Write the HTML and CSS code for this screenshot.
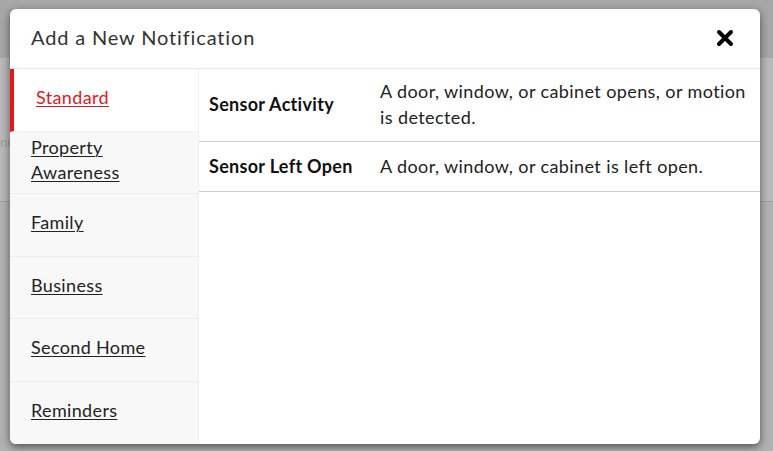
FILE: index.html
```html
<!DOCTYPE html>
<html>
<head>
<meta charset="utf-8">
<link rel="stylesheet" href="styles.css">
</head>
<body>
<div class="page">
  <div class="page-head"></div>
  <div class="page-band"><span class="ghost">nu</span></div>
  <div class="page-rest"></div>
</div>
<div class="overlay">
  <div class="modal">
    <div class="modal-head">
      <h1 class="title">Add a New Notification</h1>
      <button class="close" aria-label="Close">
        <svg width="18" height="18" viewBox="0 0 18 18"><path d="M3 3 L15 15 M15 3 L3 15" stroke="#000" stroke-width="4" stroke-linecap="round"/></svg>
      </button>
    </div>
    <div class="modal-body">
      <nav class="nav">
        <a class="nav-item active" href="#">Standard</a>
        <a class="nav-item" href="#">Property<br>Awareness</a>
        <a class="nav-item" href="#">Family</a>
        <a class="nav-item" href="#">Business</a>
        <a class="nav-item" href="#">Second Home</a>
        <a class="nav-item" href="#">Reminders</a>
      </nav>
      <div class="list">
        <div class="row tall">
          <div class="name">Sensor Activity</div>
          <div class="desc">A door, window, or cabinet opens, or motion is detected.</div>
        </div>
        <div class="row">
          <div class="name">Sensor Left Open</div>
          <div class="desc">A door, window, or cabinet is left open.</div>
        </div>
      </div>
    </div>
  </div>
</div>
</body>
</html>
```
FILE: styles.css
```css
* { box-sizing: border-box; }
html, body { margin: 0; padding: 0; }
body {
  width: 773px;
  height: 451px;
  overflow: hidden;
  font-family: "Lato", "Liberation Sans", sans-serif;
  position: relative;
  background: #b3b3b3;
}
.page { display: flex; flex-direction: column; height: 451px; }
.page-head { height: 58px; background: #a7a7a7; }
.page-band { height: 144px; background: #b9b9b9; border-bottom: 1px solid #9e9e9e; position: relative; }
.ghost { position: absolute; left: 0; top: 76px; color: #9c9c9c; font-size: 13px; }
.page-rest { flex: 1; background: #b2b2b2; }

.overlay { position: absolute; inset: 0; }
.modal {
  position: absolute;
  left: 10px;
  top: 9px;
  width: 750px;
  height: 435px;
  background: #fff;
  border-radius: 6px;
  box-shadow: 0 3px 8px rgba(0,0,0,0.55);
  display: flex;
  flex-direction: column;
  overflow: hidden;
}
.modal-head {
  height: 60px;
  flex: none;
  border-bottom: 1px solid #e8e8e8;
  display: flex;
  align-items: center;
  justify-content: space-between;
  padding: 0 26px 3px 21px;
}
.title {
  margin: 0;
  font-weight: 400;
  font-size: 20px;
  color: #333;
  letter-spacing: 0.85px;
}
.close {
  border: 0;
  background: none;
  padding: 0;
  width: 18px;
  height: 18px;
  display: flex;
  margin-top: 2px;
}
.modal-body { flex: 1; display: flex; }
.nav {
  width: 189px;
  flex: none;
  background: #f8f8f8;
  border-right: 1px solid #efefef;
  display: flex;
  flex-direction: column;
}
.nav-item {
  height: 62.5px;
  flex: none;
  display: flex;
  align-items: center;
  padding: 0 0 4px 21px;
  border-bottom: 1px solid #ededed;
  color: #222;
  font-size: 18px;
  letter-spacing: 0.35px;
  line-height: 25px;
  text-decoration: underline;
  text-decoration-thickness: 1px;
  text-underline-offset: 2px;
}
.nav-item.active {
  background: #fff;
  color: #e3181d;
  border-left: 4px solid #e3181d;
  padding-left: 22px;
  border-bottom-color: #f2f2f2;
}
.nav-item:last-child { border-bottom: 0; }
.list { flex: 1; display: flex; flex-direction: column; }
.row {
  display: flex;
  align-items: center;
  border-bottom: 1px solid #cfcfcf;
  min-height: 50px;
  padding: 0 10px 2px;
}
.row.tall { height: 73px; }
.name {
  width: 171px;
  flex: none;
  font-weight: 700;
  font-size: 18px;
  letter-spacing: 0.3px;
  color: #111;
}
.desc {
  flex: 1;
  font-size: 18px;
  letter-spacing: 0.4px;
  line-height: 26px;
  color: #222;
}
```
